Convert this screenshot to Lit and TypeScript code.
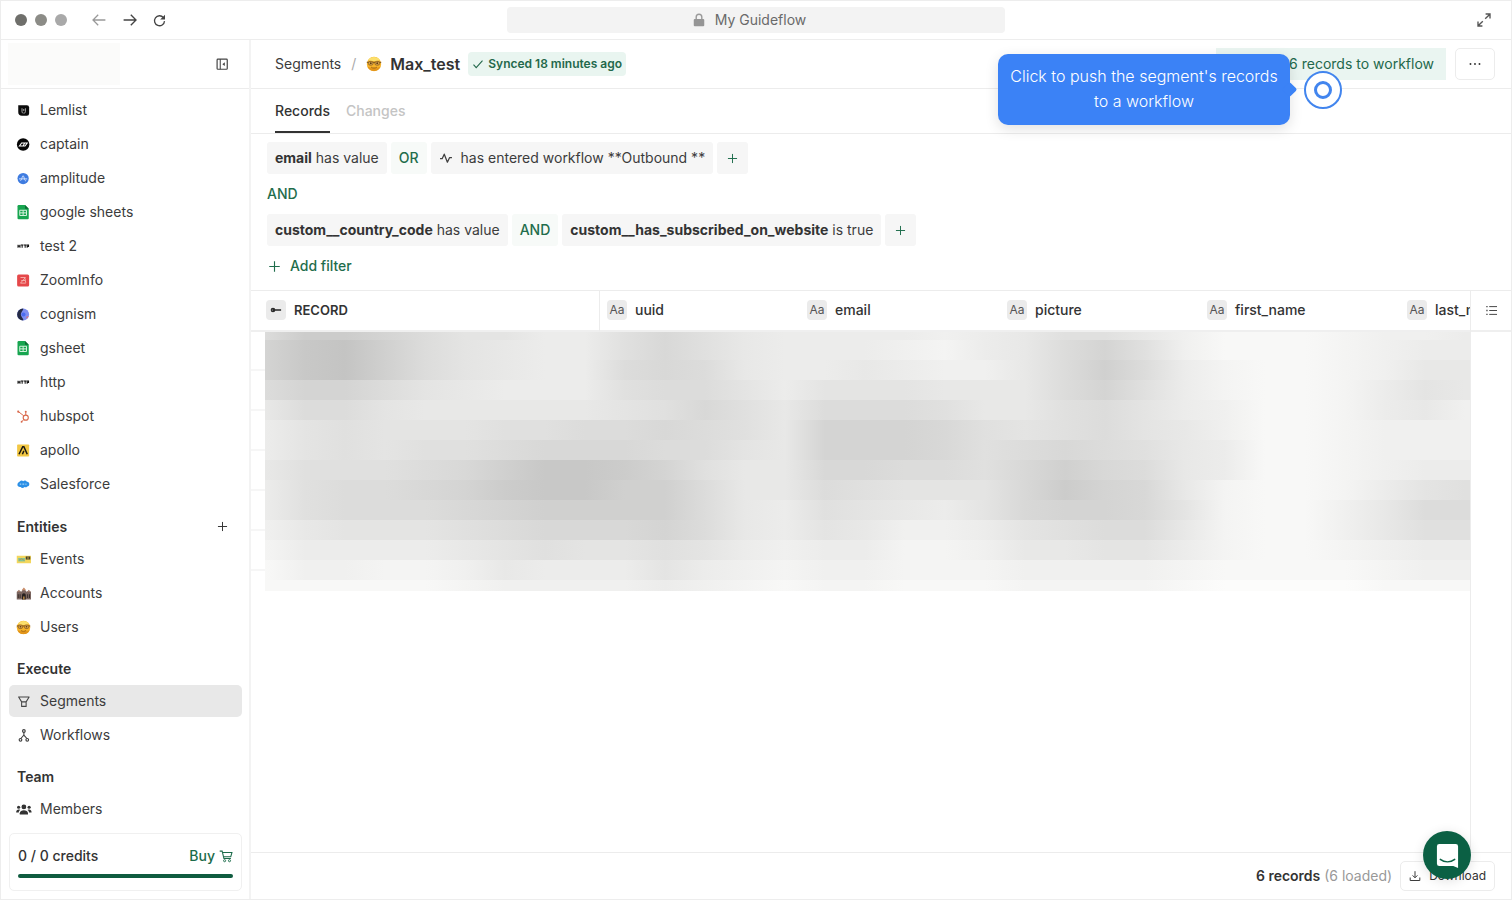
import { LitElement, html, css, svg, nothing } from "lit";
import { customElement, property } from "lit/decorators.js";
import { classMap } from "lit/directives/class-map.js";

const sheet = svg`
  <path d="M3.5 0H12l5 5v12.5A1.5 1.5 0 0 1 15.500 19H3.500A1.500 1.500 0 0 1 2 17.500v-16A1.500 1.500 0 0 1 3.500 0z" fill="#17a550"/>
  <path d="M12 0l5 5h-5z" fill="#0c6b33"/>
  <path d="M5 7h9v7H5zM5 10.500h9M9.500 7v7" fill="none" stroke="#d9f3e0" stroke-width="1.300"/>`;

const httpMark = svg`
  <g fill="none" stroke="#111" stroke-width="1.400">
    <path d="M2.700 7.500v4M5.300 7.500v4M2.700 9.500h2.600M6.500 8h3.400M8.200 8v3.500M10.500 8h3.400M12.200 8v3.500M14.900 11.500V8h1.800v2h-1.800"/>
  </g>`;

const nerd = svg`
  <circle cx="10" cy="10" r="9" fill="#f6b32a"/>
  <path d="M2.500 5.200a9 9 0 0 1 15 0l-7.500 1.300z" fill="#fbdf6c"/>
  <path d="M1.800 13.500a9 9 0 0 0 16.400 0l-8.200 2z" fill="#e2951b"/>
  <path d="M1 8h18" stroke="#8a5f22" stroke-width="1.600"/>
  <rect x="3" y="6.800" width="5.800" height="4.600" rx="2" fill="#d9a24a" stroke="#8a5f22" stroke-width="1"/>
  <rect x="11.200" y="6.800" width="5.800" height="4.600" rx="2" fill="#d9a24a" stroke="#8a5f22" stroke-width="1"/>
  <circle cx="6" cy="9" r="1.100" fill="#5a3a12"/><circle cx="14" cy="9" r="1.100" fill="#5a3a12"/>
  <path d="M6.500 14c2 1.500 5 1.500 7 0" fill="none" stroke="#9a5f14" stroke-width="1.200"/>`;

const icons: Record<string, unknown> = {
  lemlist: svg`<path d="M3 3h11.500a3 3 0 0 1 3 3v8a3 3 0 0 1-3 3H8a5 5 0 0 1-5-5z" fill="#0c0c0c"/><path d="M8 7v4.500c0 1.500 1 2 2 2M12.500 7v4.500c0 1.500-1 2-2 2M10.300 8v2.500" fill="none" stroke="#ccc" stroke-width="1.100"/>`,
  captain: svg`<circle cx="9.500" cy="10" r="8.300" fill="#050505"/><path d="M4.500 12l3-4h4l-2 4zM9.500 12l2-4h3.500l-3 4z" fill="none" stroke="#fff" stroke-width="1.400"/>`,
  amplitude: svg`<circle cx="9.500" cy="10" r="7.500" fill="#3f7ce0"/><path d="M4 10.500h11M6 13c2-1.500 2.500-8 3.800-6.500 1.500 2 1.500 8 3.700 6" fill="none" stroke="#d9e6ff" stroke-width="1.200"/>`,
  sheet,
  http: httpMark,
  zoominfo: svg`<rect x="1.500" y="2" width="16" height="16" rx="2" fill="#e5484a"/><path d="M6 6h6.500L6 13.500h7M7 10h5M12 7l1 6" fill="none" stroke="#f6b5b0" stroke-width="1.200"/>`,
  cognism: svg`<circle cx="9.500" cy="10" r="8" fill="#7f8ff0"/><path d="M9.500 2a8 8 0 0 0 0 16c1.500-2-3-4.500-3-8s4-6 3-8z" fill="#252b45"/><circle cx="10" cy="10" r="2.700" fill="#4b6cf0"/><path d="M14 15.500a8 8 0 0 0 3-3.500l-3 1z" fill="#f0706a"/>`,
  hubspot: svg`<g fill="none" stroke="#d9694c"><circle cx="13" cy="11.500" r="3.400" stroke-width="1.500"/><path d="M13 8V3.500M2.500 3l7.800 6M10.500 14L7 17.500" stroke-width="1.300"/></g><circle cx="13" cy="3.500" r="1.300" fill="#d9694c"/><circle cx="3" cy="3.500" r="1.400" fill="#d9694c"/><circle cx="7.500" cy="17" r="1.200" fill="#d9694c"/>`,
  apollo: svg`<rect x="1.500" y="2" width="16" height="16" rx="1" fill="#f2c744"/><path d="M4 15l5-10h1.500L15 15M8.500 15l2-4.500" fill="none" stroke="#1b1a12" stroke-width="2"/>`,
  salesforce: svg`<path d="M5 6c1.500-1.700 3.500-1.400 4.500-.3 1.500-1.500 4-1.200 5 .5 4-.5 4.500 6 .5 6.300-1 1.700-3 1.500-3.800.8-1.200 2-4 1.800-5 0C1 14 .500 8 5 6z" fill="#2b8fe6"/><path d="M5 9.500h2M8.500 9.500H11M12.500 9.500H14" stroke="#bfe4fb" stroke-width="1.300"/>`,
  events: svg`<path d="M1 5h19v10H1z" fill="#f3d65c"/><path d="M3 8h9v4.500H3z" fill="#7fc59b"/><path d="M4 11l3-2 4 2" stroke="#c7843a" fill="none"/><path d="M13 6h6v4h-6z" fill="#2c2a25"/><path d="M15 6v4M17 6v4" stroke="#d0ad3d"/>`,
  accounts: svg`<path d="M1 18V8l3-2 3 1.500L10.500 3 14 7.500 17 6l3 2v10z" fill="#7a655f"/><path d="M10.500 2l3 3.500h-6z" fill="#c98d6a"/><path d="M1 8l3-3 2 3M15 8l2-3 3 3" fill="#a17b6b"/><path d="M8 18v-6a2.500 2.500 0 0 1 5 0v6z" fill="#26201f"/><path d="M3 11v5M5.500 11v5M15.500 11v5M18 11v5" stroke="#2f2725" stroke-width="1.200"/><path d="M10.500 14v4" stroke="#e6a84e" stroke-width="1.500"/>`,
  nerd,
  funnel: svg`<path d="M3.500 4h14l-4 6.500V16.500h-6v-6zM7.500 10.500h6" fill="none" stroke="#444" stroke-width="1.400" stroke-linejoin="round"/>`,
  flow: svg`<g fill="none" stroke="#3f3f3f" stroke-width="1.500"><circle cx="10.500" cy="4" r="1.800"/><circle cx="6" cy="15.800" r="1.800"/><circle cx="15" cy="15.800" r="1.800"/><path d="M10.500 5.800v3.700L6.500 14M10.500 9.500L14.500 14"/></g>`,
  members: svg`<g fill="#333"><circle cx="10.500" cy="6.500" r="3.200"/><path d="M5 16.500v-1.500c0-5.500 11-5.500 11 0v1.500z"/><circle cx="3.500" cy="7" r="2.100"/><circle cx="17.500" cy="7" r="2.100"/><path d="M.2 14c0-4 3.300-4.500 5.500-3.300-1.700 1-2 2.200-2 3.300zM20.800 14c0-4-3.300-4.500-5.500-3.300 1.700 1 2 2.200 2 3.300z"/></g>`,
  collapse: svg`<rect x="3" y="3" width="14.500" height="14.500" rx="1.200" fill="none" stroke="#444" stroke-width="1.700"/><path d="M7.500 3v14.500" stroke="#444" stroke-width="1.500"/><path d="M14 7.500v5.500l-3.500-2.800z" fill="#444"/>`,
  back: svg`<path d="M18 10H2.500M9 3.500L2.500 10 9 16.500" fill="none" stroke="#999" stroke-width="1.600"/>`,
  forward: svg`<path d="M2 10h15.500M11 3.500l6.500 6.500-6.500 6.500" fill="none" stroke="#444" stroke-width="1.700"/>`,
  reload: svg`<path d="M16 5.500A7.700 7.700 0 1 0 17.700 11" fill="none" stroke="#444" stroke-width="2"/><path d="M18.500 1v7.500H11z" fill="#444"/>`,
  expand: svg`<path d="M11.500 8.500L17 3M12 2.500h5.500V8M8.500 11.500L3 17M8 17.500H2.500V12" fill="none" stroke="#555" stroke-width="1.700"/>`,
  lock: svg`<path d="M6 9V5.700a4 4 0 0 1 8 0V9" fill="none" stroke="#9a9a9a" stroke-width="2"/><rect x="2.500" y="8.500" width="15" height="10.500" rx="1.500" fill="#959595"/>`,
  plus: svg`<path d="M10 3v14M3 10h14" fill="none" stroke="currentColor" stroke-width="1.500"/>`,
  check: svg`<path d="M2.500 11l4.500 5L17.500 4.500" fill="none" stroke="currentColor" stroke-width="1.800"/>`,
  pulse: svg`<path d="M1.500 11h3L7.500 4.500l4.500 11.500 3-6.500h3.500" fill="none" stroke="#3f3f3f" stroke-width="1.800" stroke-linejoin="round"/>`,
  key: svg`<circle cx="5" cy="10" r="3.900" fill="#2c2c2c"/><path d="M8 10h10.500" stroke="#2c2c2c" stroke-width="2.600"/><circle cx="4" cy="10" r="1" fill="#aaa"/>`,
  list: svg`<path d="M6.500 4H18.500M6.500 10H18.500M6.500 16H18.500" stroke="#444" stroke-width="1.500"/><path d="M2 4h2M2 10h2M2 16h2" stroke="#444" stroke-width="2"/>`,
  cart: svg`<path d="M1 3h3.500l2.500 10.500h10M4.800 5H18.500l-1.700 6H6.500" fill="none" stroke="currentColor" stroke-width="1.500"/><circle cx="8" cy="16.700" r="1.500" fill="none" stroke="currentColor" stroke-width="1.300"/><circle cx="15" cy="16.700" r="1.500" fill="none" stroke="currentColor" stroke-width="1.300"/>`,
  download: svg`<path d="M10 2v10.500M6 9l4 4 4-4M2 12.500V17.500h16V12.500" fill="none" stroke="#333" stroke-width="1.600"/>`,
  dots: svg`<g fill="#333"><circle cx="2.500" cy="10" r="1.600"/><circle cx="10" cy="10" r="1.600"/><circle cx="17.500" cy="10" r="1.600"/></g>`,
  chat: svg`<path d="M3.500 1h17a2.500 2.500 0 0 1 2.500 2.500V26L18 24H3.500A2.500 2.500 0 0 1 1 21.500v-18A2.500 2.500 0 0 1 3.500 1z" fill="#fff"/><path d="M4.500 17c4.500 3.500 10.500 3.500 15 0" fill="none" stroke="#0b6044" stroke-width="1.500" stroke-linecap="round"/>`,
};

@customElement("app-icon")
class AppIcon extends LitElement {
  @property() name = "";
  @property({ type: Number }) size = 14;
  @property() box = "0 0 20 20";
  static styles = css`
    :host { display: inline-flex; flex: none; }
    svg { display: block; overflow: visible; }
  `;
  render() {
    return html`<svg width=${this.size} height=${this.size} viewBox=${this.box} aria-hidden="true">${icons[this.name]}</svg>`;
  }
}

interface NavItem { icon: string; label: string; active?: boolean }
interface NavSection { title?: string; add?: boolean; items: NavItem[] }

const sections: NavSection[] = [
  { items: [
    { icon: "lemlist", label: "Lemlist" },
    { icon: "captain", label: "captain" },
    { icon: "amplitude", label: "amplitude" },
    { icon: "sheet", label: "google sheets" },
    { icon: "http", label: "test 2" },
    { icon: "zoominfo", label: "ZoomInfo" },
    { icon: "cognism", label: "cognism" },
    { icon: "sheet", label: "gsheet" },
    { icon: "http", label: "http" },
    { icon: "hubspot", label: "hubspot" },
    { icon: "apollo", label: "apollo" },
    { icon: "salesforce", label: "Salesforce" },
  ] },
  { title: "Entities", add: true, items: [
    { icon: "events", label: "Events" },
    { icon: "accounts", label: "Accounts" },
    { icon: "nerd", label: "Users" },
  ] },
  { title: "Execute", items: [
    { icon: "funnel", label: "Segments", active: true },
    { icon: "flow", label: "Workflows" },
  ] },
  { title: "Team", items: [{ icon: "members", label: "Members" }] },
];

@customElement("side-nav")
class SideNav extends LitElement {
  static styles = css`
    :host { display: flex; flex-direction: column; box-sizing: border-box; width: 250px; flex: none; border-right: 2px solid #f3f3f3; }
    .head { display: flex; align-items: center; justify-content: space-between; box-sizing: border-box; height: 49px; padding: 0 20px 0 7px; border-bottom: 1px solid #ececec; flex: none; }
    .brand { width: 112px; height: 42px; background: #fbfbfa; }
    button { font: inherit; color: inherit; background: none; border: 0; padding: 0; cursor: pointer; display: inline-flex; }
    nav { flex: 1; min-height: 0; overflow: hidden; padding: 5px 7px 0 8px; display: flex; flex-direction: column; gap: 16px; }
    .title { display: flex; align-items: center; justify-content: space-between; height: 20px; margin: 0 0 6px; padding: 0 13px 0 8px; font-size: 14px; font-weight: 600; color: #333; }
    .title.action { height: 21px; }
    ul { list-style: none; margin: 0; padding: 0; display: flex; flex-direction: column; gap: 2px; }
    a { display: grid; grid-template-columns: 15px 1fr; align-items: center; gap: 9px; height: 32px; padding: 0 7px; border-radius: 5px; color: #3c3c3c; text-decoration: none; font-size: 14px; }
    a.active { background: #e8e8e8; }
    .credits { margin: 7px 7px 8px 8px; padding: 12px 8px; border: 1px solid #f0f0f0; border-radius: 5px; color: #333; font-size: 14px; font-weight: 500; }
    .row { display: flex; justify-content: space-between; align-items: center; height: 20px; }
    .buy { align-items: center; gap: 4px; color: #1b6b4a; }
    .bar { height: 4px; margin-top: 8px; border-radius: 2px; background: #0f5c40; }
  `;
  render() {
    return html`
      <div class="head">
        <div class="brand"></div>
        <button aria-label="Collapse sidebar"><app-icon name="collapse" size="14"></app-icon></button>
      </div>
      <nav>
        ${sections.map((s) => html`<section>
          ${s.title ? html`<div class=${classMap({ title: true, action: !!s.add })}><span>${s.title}</span>
            ${s.add ? html`<button aria-label="Add entity"><app-icon name="plus" size="13"></app-icon></button>` : nothing}</div>` : nothing}
          <ul>${s.items.map((i) => html`<li><a href="#" class=${classMap({ active: !!i.active })}><app-icon name=${i.icon} size="15"></app-icon><span>${i.label}</span></a></li>`)}</ul>
        </section>`)}
      </nav>
      <div class="credits">
        <div class="row"><span>0 / 0 credits</span><button class="buy">Buy <app-icon name="cart" size="14"></app-icon></button></div>
        <div class="bar"></div>
      </div>`;
  }
}

/* One hex digit per 40px step: higher is darker. */
const redaction: { height: number; levels: string }[] = [
  { height: 8, levels: "8cca866447 9754444345 7753111233 4" },
  { height: 20, levels: "adeb865447 9754443245 8a73111234 4" },
  { height: 20, levels: "adeb865448 9854454335 8b84211235 5" },
  { height: 20, levels: "8aa8654447 8864666555 8a74211246 5" },
  { height: 20, levels: "5886555556 7975888755 7864311245 3" },
  { height: 20, levels: "4676667788 9875aaa976 7865311233 3" },
  { height: 20, levels: "4676778999 8865aaa978 9875411233 3" },
  { height: 20, levels: "577789bddc a755998879 b985411234 4" },
  { height: 20, levels: "47889acddb b855876669 ca95211246 7" },
  { height: 20, levels: "478889abbb b854765469 aa96211358 8" },
  { height: 20, levels: "3566678999 a854653346 7885211357 7" },
  { height: 20, levels: "2444456766 7643442235 5664211234 4" },
  { height: 20, levels: "1332235444 6432332223 3332111123 3" },
  { height: 11, levels: "1111123333 4321221112 2221000011 1" },
];

const ramp = (levels: string) =>
  `linear-gradient(90deg, ${[...levels.replaceAll(" ", "")].map((l, i) => {
    const g = 252 - 4 * parseInt(l, 16);
    return `rgb(${g},${g},${g - 1}) ${i * 40}px`;
  }).join(", ")})`;

const columns = ["uuid", "email", "picture", "first_name", "last_name"];

@customElement("records-table")
class RecordsTable extends LitElement {
  static styles = css`
    :host { display: flex; min-height: 0; flex: 1; border-top: 1px solid #ececec; }
    .scroll { flex: 1; min-width: 0; overflow: hidden; border-right: 1px solid #ececec; }
    table { border-collapse: separate; border-spacing: 0; table-layout: fixed; width: 1349px; }
    .first { width: 349px; }
    .other { width: 200px; }
    th { box-sizing: border-box; height: 41px; padding: 0 0 2px 7px; text-align: left; border-bottom: 2px solid #efefef; font-size: 14px; font-weight: 500; color: #333; }
    th.key { padding-left: 15px; border-right: 1px solid #ececec; font-size: 13px; font-weight: 600; }
    .cell { display: flex; align-items: center; gap: 8px; }
    .badge { display: inline-flex; align-items: center; justify-content: center; width: 20px; height: 20px; border-radius: 4px; background: #ebebeb; color: #555; font-size: 12px; font-weight: 400; }
    td { padding: 0 0 0 14px; background: repeating-linear-gradient(#fff 0 37px, #f6f6f6 37px 39px, #fff 39px 40px); }
    .side { box-sizing: border-box; width: 40px; height: 41px; border-bottom: 2px solid #efefef; display: flex; align-items: center; justify-content: center; flex: none; }
    button { background: none; border: 0; padding: 0; display: inline-flex; }
  `;
  render() {
    return html`
      <div class="scroll"><table>
        <thead><tr>
          <th class="key first" scope="col"><div class="cell"><span class="badge"><app-icon name="key" size="12"></app-icon></span>RECORD</div></th>
          ${columns.map((c) => html`<th class="other" scope="col"><div class="cell"><span class="badge">Aa</span>${c}</div></th>`)}
        </tr></thead>
        <tbody><tr><td colspan="6">
          ${redaction.map((r) => html`<div style="height:${r.height}px;background:${ramp(r.levels)}"></div>`)}
        </td></tr></tbody>
      </table></div>
      <div class="side"><button aria-label="Columns"><app-icon name="list" size="13"></app-icon></button></div>`;
  }
}

@customElement("app-root")
class AppRoot extends LitElement {
  static styles = css`
    :host { display: flex; flex-direction: column; box-sizing: border-box; height: 100vh; border: 1px solid #ededed; font-family: Inter, "Liberation Sans", sans-serif; font-size: 14px; line-height: 20px; color: #3c3c3c; background: #fff; overflow: hidden; }
    button { font: inherit; color: inherit; background: none; border: 0; padding: 0; display: inline-flex; align-items: center; cursor: pointer; }
    .browser { display: grid; grid-template-columns: 1fr 33% 1fr; align-items: center; box-sizing: border-box; height: 39px; flex: none; border-bottom: 1px solid #ededed; }
    .left { display: flex; align-items: center; gap: 15px; padding-left: 14px; }
    .lights { display: flex; gap: 8px; margin-right: 9px; }
    .light { width: 12px; height: 12px; border-radius: 50%; background: #6f6f6b; }
    .light.mid { background: #8c8c87; }
    .light.dim { background: #a9a9a9; }
    .address { display: flex; align-items: center; justify-content: center; gap: 9px; height: 26px; padding-right: 14px; border-radius: 4px; background: #f3f3f3; color: #6a6a6a; }
    .right { display: flex; justify-content: flex-end; padding-right: 19px; }
    .app { display: flex; flex: 1; min-height: 0; }
    main { display: flex; flex-direction: column; flex: 1; min-width: 0; }
    .header { position: relative; display: flex; align-items: center; justify-content: space-between; box-sizing: border-box; height: 49px; padding: 0 16px 0 24px; border-bottom: 1px solid #ececec; flex: none; }
    .crumbs { display: flex; align-items: center; gap: 10px; }
    .crumbs a { color: inherit; text-decoration: none; }
    .slash { color: #aaa; }
    h1 { display: flex; align-items: center; gap: 8px; margin: 0; font-size: 16px; line-height: 24px; font-weight: 600; color: #333; }
    .title { display: flex; align-items: center; gap: 8px; }
    .sync { display: inline-flex; align-items: center; gap: 4px; height: 24px; padding: 0 4px; border-radius: 4px; background: #e9f5f0; color: #23684b; font-size: 12px; font-weight: 600; }
    .actions { display: flex; gap: 9px; }
    .push { gap: 8px; height: 32px; padding: 0 12px; background: #eaf5f1; color: #23684b; }
    .more { justify-content: center; width: 40px; height: 32px; border: 1px solid #ececec; border-radius: 5px; box-sizing: border-box; }
    .tabs { display: flex; gap: 16px; box-sizing: border-box; height: 45px; padding: 0 24px; border-bottom: 1px solid #ececec; flex: none; }
    .tab { box-sizing: border-box; padding-top: 2px; font-weight: 500; color: #c4c4c4; border-bottom: 2px solid transparent; }
    .tab.on { color: #333; border-color: #333; }
    .filters { display: flex; flex-direction: column; gap: 4px; padding: 8px 16px; }
    .frow { display: flex; align-items: center; gap: 4px; height: 32px; }
    .chip { gap: 8px; height: 32px; padding: 0 8px; border-radius: 3px; background: #f6f6f6; white-space: pre; }
    .chip b { font-weight: 700; color: #333; }
    .chip.op { background: #f7faf8; }
    .chip.add { width: 31px; justify-content: center; }
    .op, .add, .link { color: #1f6d4c; font-weight: 500; }
    .link { gap: 8px; }
    .footer { display: flex; align-items: center; justify-content: flex-end; gap: 8px; box-sizing: border-box; height: 47px; padding: 0 16px; border-top: 1px solid #ececec; flex: none; }
    .footer b { font-weight: 600; color: #333; }
    .muted { color: #999; }
    .download { gap: 8px; box-sizing: border-box; height: 30px; padding: 0 8px; border: 1px solid #ececec; border-radius: 5px; font-size: 12px; color: #333; }
    .tip { position: absolute; z-index: 2; top: 14px; right: 221px; box-sizing: border-box; width: 292px; padding: 10px 8px 11px; border-radius: 10px; background: #3b82f6; color: #fff; font-size: 16px; line-height: 25px; font-weight: 300; text-align: center; box-shadow: 0 4px 14px rgba(0, 0, 0, 0.12); }
    .tip::after { content: ""; position: absolute; right: -5px; top: 30px; width: 11px; height: 11px; background: #3b82f6; border-radius: 2px; transform: rotate(45deg); }
    .spot { position: absolute; z-index: 2; top: 31px; right: 169px; box-sizing: border-box; width: 38px; height: 38px; border: 2px solid #4285ee; border-radius: 50%; background: #fff; justify-content: center; }
    .dot { box-sizing: border-box; width: 18px; height: 18px; border: 3px solid #4285ee; border-radius: 50%; }
    .chat { position: absolute; z-index: 3; right: 41px; bottom: 21px; width: 48px; height: 48px; border-radius: 50%; background: #0b6044; justify-content: center; box-shadow: 0 2px 12px rgba(0, 0, 0, 0.12); }
  `;
  render() {
    return html`
      <div class="browser">
        <div class="left">
          <div class="lights"><span class="light"></span><span class="light mid"></span><span class="light dim"></span></div>
          <button aria-label="Back"><app-icon name="back" size="16"></app-icon></button>
          <button aria-label="Forward"><app-icon name="forward" size="16"></app-icon></button>
          <button aria-label="Reload"><app-icon name="reload" size="13"></app-icon></button>
        </div>
        <div class="address"><app-icon name="lock" size="14"></app-icon><span>My Guideflow</span></div>
        <div class="right"><button aria-label="Full screen"><app-icon name="expand" size="16"></app-icon></button></div>
      </div>
      <div class="app">
        <side-nav></side-nav>
        <main>
          <div class="header">
            <div class="crumbs">
              <a href="#">Segments</a><span class="slash">/</span>
              <div class="title"><h1><app-icon name="nerd" size="16"></app-icon>Max_test</h1>
              <span class="sync"><app-icon name="check" size="12"></app-icon>Synced 18 minutes ago</span></div>
            </div>
            <div class="actions">
              <button class="push"><app-icon name="flow" size="16"></app-icon>Push 6 records to workflow</button>
              <button class="more" aria-label="More"><app-icon name="dots" size="12"></app-icon></button>
            </div>
            <div class="tip" role="tooltip">Click to push the segment's records to a workflow</div>
            <button class="spot" aria-label="Next step"><span class="dot"></span></button>
          </div>
          <div class="tabs" role="tablist">
            <button class="tab on" role="tab" aria-selected="true">Records</button>
            <button class="tab" role="tab" aria-selected="false">Changes</button>
          </div>
          <div class="filters">
            <div class="frow">
              <button class="chip"><span><b>email</b> has value</span></button>
              <button class="chip op">OR</button>
              <button class="chip"><app-icon name="pulse" size="14"></app-icon><span>has entered workflow **Outbound **</span></button>
              <button class="chip add" aria-label="Add condition"><app-icon name="plus" size="13"></app-icon></button>
            </div>
            <div class="frow"><button class="link">AND</button></div>
            <div class="frow">
              <button class="chip"><span><b>custom__country_code</b> has value</span></button>
              <button class="chip op">AND</button>
              <button class="chip"><span><b>custom__has_subscribed_on_website</b> is true</span></button>
              <button class="chip add" aria-label="Add condition"><app-icon name="plus" size="13"></app-icon></button>
            </div>
            <div class="frow"><button class="link"><app-icon name="plus" size="15"></app-icon>Add filter</button></div>
          </div>
          <records-table></records-table>
          <div class="footer">
            <span><b>6 records</b> <span class="muted">(6 loaded)</span></span>
            <button class="download"><app-icon name="download" size="12"></app-icon>Download</button>
          </div>
        </main>
      </div>
      <button class="chat" aria-label="Open chat"><app-icon name="chat" size="25" box="0 0 24 26"></app-icon></button>`;
  }
}
